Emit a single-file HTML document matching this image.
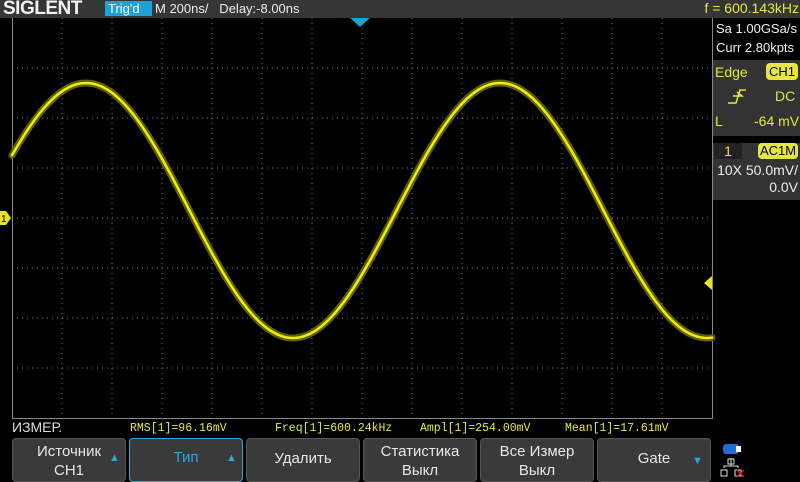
<!DOCTYPE html>
<html><head><meta charset="utf-8"><style>
body{margin:0;width:800px;height:480px;background:#000;overflow:hidden;position:relative;font-family:"Liberation Sans",sans-serif;}
.a{position:absolute;white-space:nowrap;}
.btn{position:absolute;top:438px;height:44px;background:#3a3a3a;border:1px solid #555;border-radius:4px;box-sizing:border-box;color:#e8e8e8;font-size:15px;text-align:center;line-height:19px;}
.mono{font-family:"Liberation Mono",monospace;color:#e6e640;font-size:11.5px;}
</style></head><body>
<div class="a" style="left:0;top:0;width:800px;height:18px;background:#363636"></div>
<div class="a" style="left:3px;top:-2px;font-size:19px;font-weight:bold;color:#f2f2f2;letter-spacing:-0.5px">SIGLENT</div>
<div class="a" style="left:105px;top:1px;width:44px;height:15px;background:#1ea0d8;color:#fff;font-size:13px;line-height:15px;padding-left:3px">Trig'd</div>
<div class="a" style="left:155px;top:1px;font-size:13px;color:#eee;line-height:15px">M 200ns/&nbsp;&nbsp; Delay:-8.00ns</div>
<div class="a" style="left:700px;top:0;width:99px;text-align:right;font-size:14px;color:#e6e640;line-height:17px">f = 600.143kHz</div>

<div class="a" style="left:713px;top:19px;width:87px;height:40px;background:#000;color:#eee;font-size:13px;line-height:19px;padding-left:3px">Sa 1.00GSa/s<br>Curr 2.80kpts</div>
<div class="a" style="left:712px;top:60px;width:88px;height:76px;background:#333"></div>
<div class="a" style="left:715px;top:64px;color:#e6e640;font-size:14px">Edge</div>
<div class="a" style="left:766px;top:63px;width:32px;height:17px;background:#e6e640;border-radius:4px;color:#000;font-size:13px;text-align:center;line-height:17px">CH1</div>
<div class="a" style="left:775px;top:88px;color:#e6e640;font-size:14px">DC</div>
<div class="a" style="left:715px;top:113px;color:#e6e640;font-size:14px">L</div>
<div class="a" style="left:754px;top:113px;color:#e6e640;font-size:14px">-64 mV</div>
<div class="a" style="left:712px;top:143px;width:88px;height:57px;background:#333"></div>
<div class="a" style="left:714px;top:143px;width:28px;height:16px;background:#222;color:#e6e640;font-size:14px;text-align:center;line-height:16px">1</div>
<div class="a" style="left:758px;top:143px;width:40px;height:16px;background:#e6e640;border-radius:4px;color:#000;font-size:13px;text-align:center;line-height:16px">AC1M</div>
<div class="a" style="left:712px;top:162px;width:86px;text-align:right;color:#eee;font-size:14px;line-height:17px">10X 50.0mV/<br>0.0V</div>

<svg class="a" style="left:0;top:0" width="800" height="480">
<g stroke="#777" stroke-width="1" stroke-dasharray="1 4" fill="none">
<path d="M62 18V418M112 18V418M162 18V418M212 18V418M262 18V418M312 18V418M362 18V418M412 18V418M462 18V418M512 18V418M562 18V418M612 18V418M662 18V418"/>
<path d="M12 68H712M12 118H712M12 168H712M12 218H712M12 268H712M12 318H712M12 368H712"/>
</g>
<path d="M12.5 18V418.5H712.5V18" stroke="#888" fill="none"/>
<polygon points="350,18 370,18 360,27" fill="#1ea0d8"/>
<polygon points="0,211 6,211 11,218 6,225 0,225" fill="#e6e620"/>
<text x="1" y="222" font-size="10" font-family="Liberation Sans" fill="#000">1</text>
<polygon points="712,276 712,290 704,283" fill="#e6e620"/>
<g fill="none" stroke-linejoin="round" stroke-linecap="round">
<path id="w1" d="M12 148L32 125L52 100.7L72 86.3L92 83.4L112 92.2L132 111.8L152 140.8L172 176L192 214.3L212 252.4L232 286.6L252 313.9L272 331.6L292 338L312 332.6L332 315.8L352 289.3L372 256L392 218.3L412 179.9L432 144L452 114.2L472 93.5L492 83.8L512 85.6L532 99.1L552 122.5L572 153.9L592 190.2L612 228.5L632 265.7L652 297.6L672 321.6L692 335.4L712 337.4" stroke="#5e5e0e" stroke-width="7"/>
<path id="w2" d="M12 148L32 125L52 100.7L72 86.3L92 83.4L112 92.2L132 111.8L152 140.8L172 176L192 214.3L212 252.4L232 286.6L252 313.9L272 331.6L292 338L312 332.6L332 315.8L352 289.3L372 256L392 218.3L412 179.9L432 144L452 114.2L472 93.5L492 83.8L512 85.6L532 99.1L552 122.5L572 153.9L592 190.2L612 228.5L632 265.7L652 297.6L672 321.6L692 335.4L712 337.4" stroke="#f0f000" stroke-width="2.5"/>
</g>
<path d="M728 103H736L740 90H746M733 96L742 96L737 92" stroke="#e6e640" stroke-width="1.5" fill="none"/>
<rect x="723" y="444" width="16" height="10" rx="3" fill="#1e6fd0"/>
<rect x="736" y="446" width="5" height="6" fill="#fff"/>
<path d="M731 458V466M724 468V466H738V468M721 470H727V476H721ZM735 470H741V476H735ZM728 459H734V464H728Z" stroke="#ddd" fill="none"/>
<path d="M737 470L744 477M744 470L737 477" stroke="#d02020" stroke-width="1.5"/>
</svg>
<script>
var d="";for(var x=12;x<=712;x+=2){var y=210.5-127.5*Math.cos(2*Math.PI*(x-86)/414);d+=(x==12?"M":"L")+x+" "+y.toFixed(1);}
document.getElementById("w1").setAttribute("d",d);document.getElementById("w2").setAttribute("d",d);
</script>

<div class="a" style="left:12px;top:419px;color:#ddd;font-size:14px">ИЗМЕР.</div>
<div class="a mono" style="left:130px;top:422px">RMS[1]=96.16mV</div>
<div class="a mono" style="left:275px;top:422px">Freq[1]=600.24kHz</div>
<div class="a mono" style="left:420px;top:422px">Ampl[1]=254.00mV</div>
<div class="a mono" style="left:565px;top:422px">Mean[1]=17.61mV</div>

<div class="btn" style="left:12px;width:114px;padding-top:3px">Источник<br>CH1<span class="a" style="left:96px;top:10px;color:#2aa8e0;font-size:11px">▲</span></div>
<div class="btn" style="left:129px;width:114px;border-color:#2aa8e0;color:#2aa8e0;line-height:38px">Тип<span class="a" style="left:96px;top:0;color:#2aa8e0;font-size:11px">▲</span></div>
<div class="btn" style="left:246px;width:114px;line-height:40px">Удалить</div>
<div class="btn" style="left:363px;width:114px;padding-top:3px">Статистика<br>Выкл</div>
<div class="btn" style="left:480px;width:114px;padding-top:3px">Все Измер<br>Выкл</div>
<div class="btn" style="left:597px;width:114px;line-height:40px">Gate<span class="a" style="left:94px;top:2px;color:#2aa8e0;font-size:11px">▼</span></div>
</body></html>
